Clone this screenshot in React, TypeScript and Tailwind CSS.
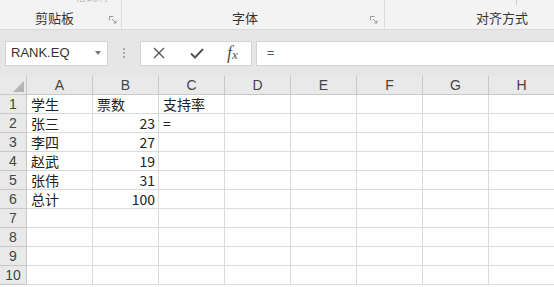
import React from "react";

const COLS = ["A", "B", "C", "D", "E", "F", "G", "H"];

type Cell = { text: string; right?: boolean };

const DATA: Record<number, Record<string, Cell>> = {
    1: { A: { text: "学生" }, B: { text: "票数" }, C: { text: "支持率" } },
    2: { A: { text: "张三" }, B: { text: "23", right: true }, C: { text: "=" } },
    3: { A: { text: "李四" }, B: { text: "27", right: true } },
    4: { A: { text: "赵武" }, B: { text: "19", right: true } },
    5: { A: { text: "张伟" }, B: { text: "31", right: true } },
    6: { A: { text: "总计" }, B: { text: "100", right: true } },
};

const ROWS = [1, 2, 3, 4, 5, 6, 7, 8, 9, 10];

const font = "font-['Noto_Sans_CJK_SC','Liberation_Sans',sans-serif]";

function Launcher() {
    return (
        <svg viewBox="0 0 8 8" className="w-[8px] h-[8px] text-[#9a9a9a]">
            <path d="M0.5 0.5h4M0.5 0.5v4" stroke="currentColor" fill="none" strokeWidth="1" />
            <path d="M3 3l4 4M7 4.5v2.5h-2.5" stroke="currentColor" fill="none" strokeWidth="1" />
        </svg>
    );
}

function Ribbon() {
    return (
        <div className={`flex h-[30px] bg-[#f3f3f3] border-b border-[#d9d9d9] overflow-hidden text-[13px] text-[#333] ${font}`}>
            <div className="relative w-[122px] flex items-end border-r border-[#dcdcdc] pb-[2px]">
                <span className="absolute top-[-12px] left-[75px] text-[11px] text-[#c0c0c0]">格式刷</span>
                <span className="absolute top-[-3px] left-[30px] w-[3px] h-[3px] rounded-full bg-[#cfcfcf]" />
                <span className="absolute top-[-3px] left-[58px] w-[3px] h-[3px] rounded-full bg-[#cfcfcf]" />
                <span className="pl-[35px] leading-[18px]">剪贴板</span>
                <span className="ml-auto mr-[4px] mb-[3px]"><Launcher /></span>
            </div>
            <div className="w-[263px] flex items-end border-r border-[#dcdcdc] pb-[2px]">
                <span className="pl-[110px] leading-[18px]">字体</span>
                <span className="ml-auto mr-[6px] mb-[3px]"><Launcher /></span>
            </div>
            <div className="relative flex-1 flex items-end pb-[2px]">
                <span className="absolute top-0 left-[131px] w-px h-[5px] bg-[#d0d0d0]" />
                <span className="pl-[91px] leading-[18px]">对齐方式</span>
            </div>
        </div>
    );
}

function FormulaBar() {
    return (
        <div className={`flex items-center h-[46px] bg-[#e6e6e6] pl-[5px] ${font}`}>
            <div className="flex items-center w-[103px] h-[25px] bg-white border border-[#d4d4d4] pl-[5px] pr-[6px] text-[13px] text-[#333] font-['Liberation_Sans',sans-serif]">
                <span>RANK.EQ</span>
                <svg viewBox="0 0 6 4" className="ml-auto w-[6px] h-[4px]">
                    <path d="M0 0h6L3 4z" fill="#777" />
                </svg>
            </div>
            <div className="w-[32px] flex flex-col items-center gap-[2px]">
                <span className="w-[2px] h-[2px] bg-[#a8a8a8]" />
                <span className="w-[2px] h-[2px] bg-[#a8a8a8]" />
                <span className="w-[2px] h-[2px] bg-[#a8a8a8]" />
            </div>
            <div className="flex items-center w-[112px] h-[25px] bg-white border border-[#d4d4d4]">
                <svg viewBox="0 0 12 12" className="ml-[12px] w-[12px] h-[12px]">
                    <path d="M1 1l10 10M11 1L1 11" stroke="#555" strokeWidth="1.4" fill="none" />
                </svg>
                <svg viewBox="0 0 14 12" className="ml-[25px] w-[14px] h-[12px]">
                    <path d="M1 6.5l4 4L13 2" stroke="#555" strokeWidth="2" fill="none" />
                </svg>
                <span className="ml-[23px] text-[18px] italic text-[#555] font-['Liberation_Serif',serif] leading-none">
                    f<span className="text-[13px]">x</span>
                </span>
            </div>
            <div className="ml-[4px] flex-1 flex items-center h-[25px] bg-white border-y border-l border-[#d4d4d4] pl-[10px] text-[13px] text-[#333]">
                =
            </div>
        </div>
    );
}

function Sheet() {
    return (
        <div className={`grid grid-cols-[27px_repeat(8,66px)] grid-rows-[19px_repeat(10,19px)] text-[14px] text-[#222] ${font}`}>
            <div className="relative bg-[#e9e9e9] border-r border-b border-[#c8c8c8]">
                <svg viewBox="0 0 12 12" className="absolute right-[2px] bottom-[2px] w-[11px] h-[11px]">
                    <path d="M12 0v12H0z" fill="#b5b5b5" />
                </svg>
            </div>
            {COLS.map((c) => (
                <div
                    key={c}
                    className="flex items-center justify-center bg-[#e9e9e9] border-r border-b border-[#c8c8c8] text-[14px] text-[#444] font-['Liberation_Sans',sans-serif]"
                >
                    {c}
                </div>
            ))}
            {ROWS.map((r) => (
                <React.Fragment key={r}>
                    <div className="flex items-center justify-center bg-[#e9e9e9] border-r border-b border-[#c8c8c8] text-[14px] text-[#444] font-['Liberation_Sans',sans-serif]">
                        {r}
                    </div>
                    {COLS.map((c) => {
                        const cell = DATA[r]?.[c];
                        return (
                            <div
                                key={c}
                                className={`flex items-center bg-white border-r border-b border-[#dadada] px-[4px] leading-none whitespace-nowrap ${
                                    cell?.right ? "justify-end pr-[3px]" : "justify-start"
                                }`}
                            >
                                {cell?.text}
                            </div>
                        );
                    })}
                </React.Fragment>
            ))}
        </div>
    );
}

export default function App() {
    return (
        <div className="w-[554px] h-[287px] overflow-hidden bg-white">
            <Ribbon />
            <FormulaBar />
            <Sheet />
        </div>
    );
}
